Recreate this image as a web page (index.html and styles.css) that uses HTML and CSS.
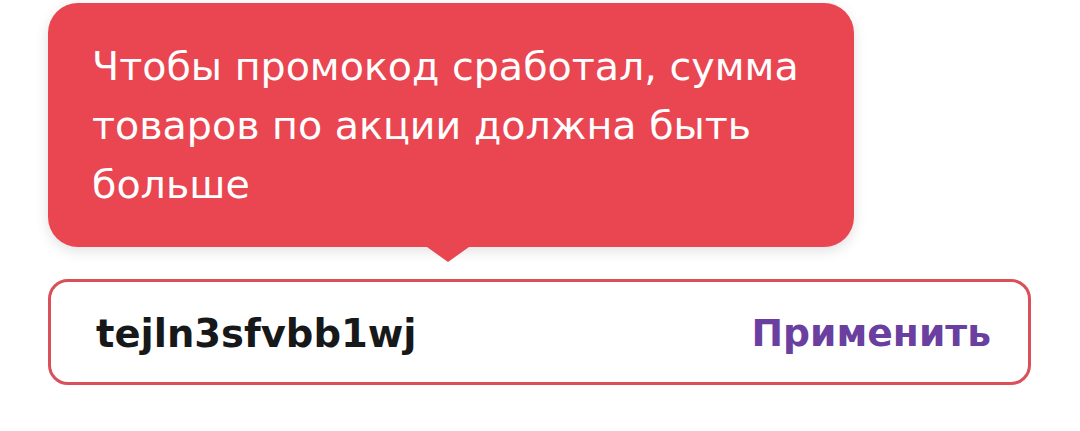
FILE: index.html
```html
<!DOCTYPE html>
<html lang="ru">
<head>
<meta charset="utf-8">
<link rel="stylesheet" href="styles.css">
</head>
<body>
<div class="page">
  <div class="tooltip">
    <p class="tooltip-text">Чтобы промокод сработал, сумма товаров по акции должна быть больше</p>
    <span class="tooltip-arrow"></span>
  </div>
  <div class="promo">
    <span class="promo-code">tejln3sfvbb1wj</span>
    <span class="promo-apply">Применить</span>
  </div>
</div>
</body>
</html>
```
FILE: styles.css
```css
html, body {
  margin: 0;
  padding: 0;
  background: #ffffff;
}
.page {
  width: 1080px;
  height: 431px;
  padding: 3px 0 0 48px;
  box-sizing: border-box;
  display: flex;
  flex-direction: column;
}
.tooltip {
  position: relative;
  width: 806px;
  height: 244px;
  box-sizing: border-box;
  background: #e94651;
  border-radius: 30px;
  padding: 34px 20px 0 44px;
  box-shadow: 0 4px 14px rgba(0, 0, 0, 0.12);
}
.tooltip-text {
  margin: 0;
  color: #ffffff;
  font-family: "DejaVu Sans", sans-serif;
  font-size: 39.6px;
  line-height: 59px;
}
.tooltip-arrow {
  position: absolute;
  left: 379px;
  bottom: -15px;
  width: 0;
  height: 0;
  border-left: 21px solid transparent;
  border-right: 21px solid transparent;
  border-top: 15px solid #e94651;
}
.promo {
  margin-top: 32px;
  width: 983px;
  height: 106px;
  box-sizing: border-box;
  border: 3px solid #d9505a;
  border-radius: 20px;
  display: flex;
  align-items: center;
  justify-content: space-between;
  padding: 2px 37px 0 45px;
}
.promo-code {
  font-family: "DejaVu Sans", sans-serif;
  font-weight: 700;
  font-size: 38.5px;
  color: #17181a;
}
.promo-apply {
  font-family: "DejaVu Sans", sans-serif;
  font-weight: 700;
  font-size: 37.7px;
  color: #6a3f9f;
}
```
